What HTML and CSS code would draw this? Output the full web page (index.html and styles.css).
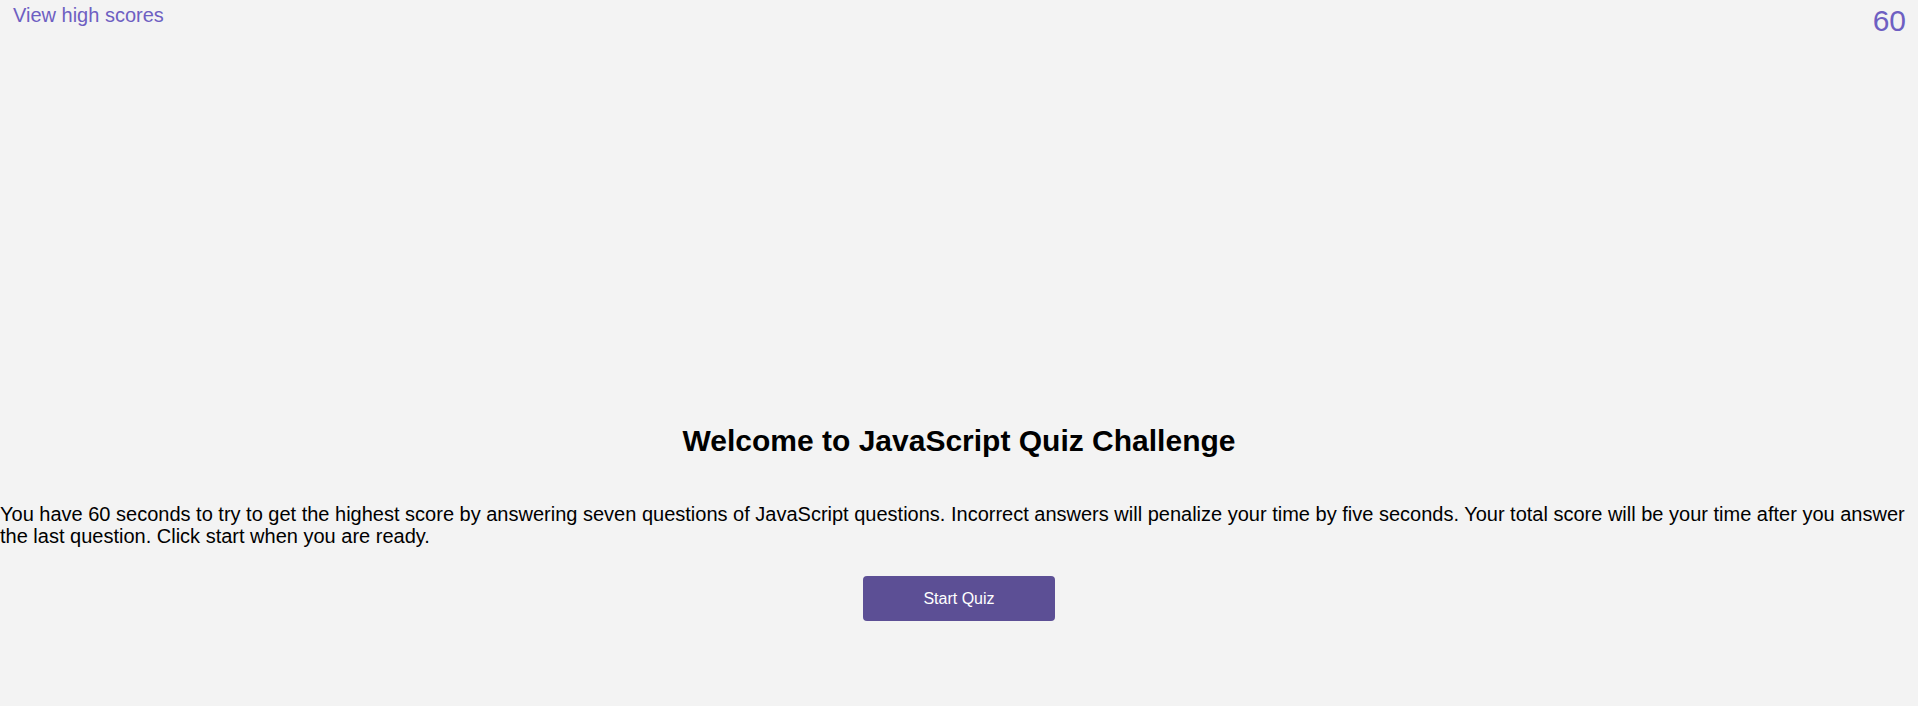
FILE: index.html
```html
<!DOCTYPE html>
<html lang="en">
<head>
<meta charset="utf-8">
<title>JavaScript Quiz Challenge</title>
<link rel="stylesheet" href="styles.css">
</head>
<body>
<header class="top-bar">
  <a class="scores-link" href="#">View high scores</a>
  <span class="timer">60</span>
</header>
<main class="intro">
  <h1 class="intro-title">Welcome to JavaScript Quiz Challenge</h1>
  <p class="intro-text">You have 60 seconds to try to get the highest score by answering seven questions of JavaScript questions. Incorrect answers will penalize your time by five seconds. Your total score will be your time after you answer the last question. Click start when you are ready.</p>
  <button class="start-btn" type="button">Start Quiz</button>
</main>
</body>
</html>
```

FILE: styles.css
```css
html, body {
  margin: 0;
  padding: 0;
  background: #f3f3f3;
  font-family: "Liberation Sans", Arial, sans-serif;
  color: #000;
}

.top-bar {
  display: flex;
  justify-content: space-between;
  align-items: flex-start;
  padding: 0 12px 0 13px;
}

.scores-link {
  color: #6e5fc2;
  text-decoration: none;
  font-size: 20px;
  line-height: 30px;
}

.timer {
  color: #6e5fc2;
  font-size: 30px;
  line-height: 42px;
}

.intro {
  display: flex;
  flex-direction: column;
  align-items: center;
  padding-top: 381px;
}

.intro-title {
  margin: 0;
  font-size: 30px;
  font-weight: bold;
  line-height: 36px;
  text-align: center;
}

.intro-text {
  align-self: stretch;
  margin: 44px 0 0 0;
  font-size: 20px;
  line-height: 22px;
}

.start-btn {
  margin-top: 29px;
  width: 192px;
  height: 45px;
  background: #5c4f95;
  color: #fff;
  border: none;
  border-radius: 4px;
  font-family: "Liberation Sans", Arial, sans-serif;
  font-size: 16px;
  cursor: pointer;
}
```
